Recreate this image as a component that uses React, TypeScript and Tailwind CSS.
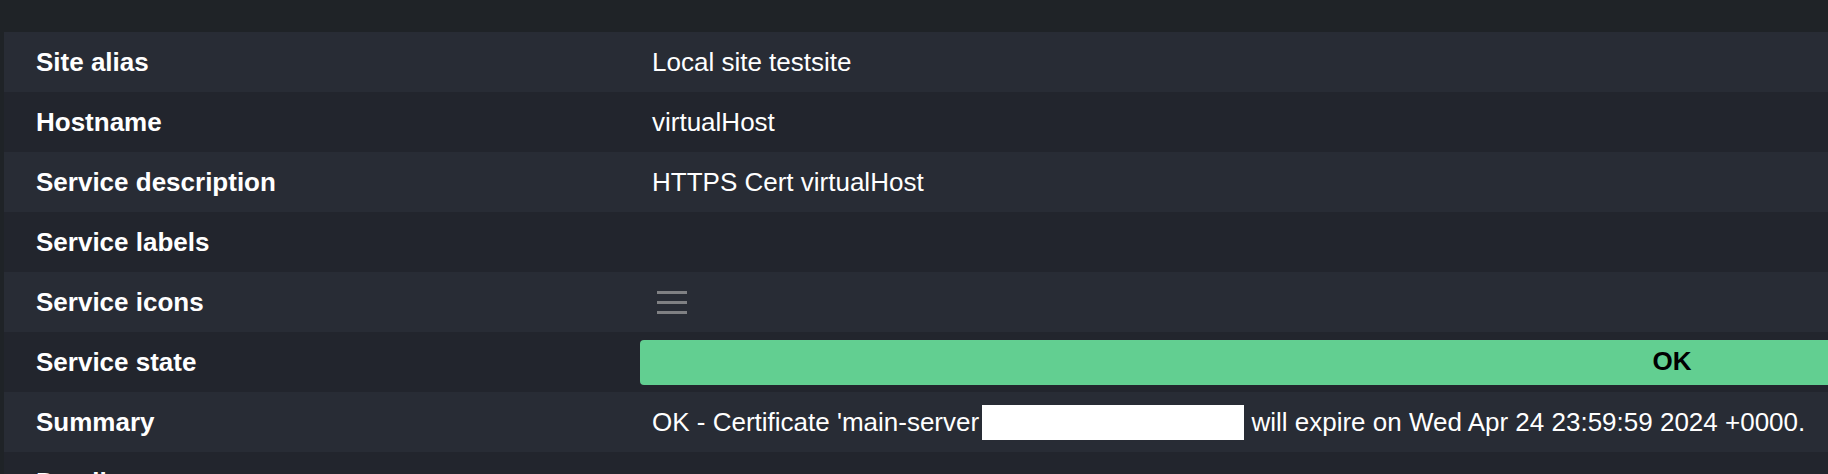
const rows: { label: string; value?: string }[] = [
  { label: "Site alias", value: "Local site testsite" },
  { label: "Hostname", value: "virtualHost" },
  { label: "Service description", value: "HTTPS Cert virtualHost" },
  { label: "Service labels", value: "" },
];

function Row({ label, odd, children }: { label: string; odd: boolean; children?: React.ReactNode }) {
  return (
    <div className={`flex h-[60px] items-center ${odd ? "bg-[#282c35]" : "bg-[#22252d]"}`}>
      <div className="w-[636px] shrink-0 pl-8 font-bold leading-[30px]">{label}</div>
      <div className="flex h-full flex-1 items-center">{children}</div>
    </div>
  );
}

export default function App() {
  return (
    <div
      className="h-[474px] w-[1828px] overflow-hidden bg-[#1f2327] pt-8 pl-1 text-[26px] text-white"
      style={{ fontFamily: '"Liberation Sans", Arial, sans-serif' }}
    >
      <div className="w-[2720px]">
        {rows.map((r, i) => (
          <Row key={r.label} label={r.label} odd={i % 2 === 0}>
            <span className="pl-3 leading-[30px]">{r.value}</span>
          </Row>
        ))}

        {/* service icons: menu glyph */}
        <Row label="Service icons" odd={true}>
          <div className="ml-[17px] flex flex-col gap-[7px]">
            <div className="h-[3px] w-[30px] bg-[#7f8083]" />
            <div className="h-[3px] w-[30px] bg-[#7f8083]" />
            <div className="h-[3px] w-[30px] bg-[#7f8083]" />
          </div>
        </Row>

        <Row label="Service state" odd={false}>
          <div className="flex h-[45px] w-[2064px] items-center justify-center rounded-[4px] bg-[#62cf91] pb-px font-bold text-black">
            OK
          </div>
        </Row>

        <Row label="Summary" odd={true}>
          <div className="flex items-center whitespace-nowrap pl-3 leading-[30px]">
            <span>OK - Certificate 'main-server</span>
            <span className="ml-[3px] inline-block h-[35px] w-[262px] bg-white" />
            <span>&nbsp;will expire on Wed Apr 24 23:59:59 2024 +0000.</span>
          </div>
        </Row>

        <Row label="Details" odd={false} />
      </div>
    </div>
  );
}
